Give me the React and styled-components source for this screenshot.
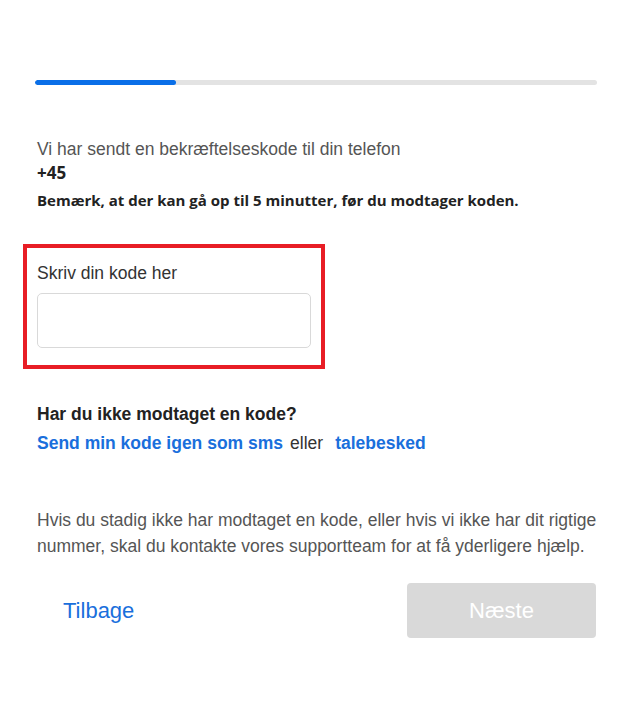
import React from 'react'
import styled, { createGlobalStyle } from 'styled-components'

const GlobalStyle = createGlobalStyle`
  body {
    margin: 0;
    background: #fff;
    font-family: "Liberation Sans", Arial, sans-serif;
  }
`

const Page = styled.div`
  width: 637px;
  height: 726px;
  padding: 80px 40px 0 35px;
  box-sizing: border-box;
`

const Track = styled.div`
  height: 5px;
  border-radius: 3px;
  background: #e3e3e3;
  overflow: hidden;
`

const Fill = styled.div`
  height: 100%;
  border-radius: 3px;
  background: #0a6fe8;
`

const Intro = styled.div`
  margin-top: 54px;
  padding-left: 2px;
`

const Lead = styled.p`
  margin: 0;
  font-size: 17.5px;
  line-height: 20px;
  color: #555;
`

const Strong = styled.p`
  margin: ${p => p.$top || 0}px 0 0;
  font-family: "Open Sans", sans-serif;
  font-weight: 700;
  font-size: ${p => p.$size}px;
  line-height: 22px;
  color: #222;
`

const Highlight = styled.div`
  margin: 33px 0 0 -12px;
  width: 302px;
  border: 4px solid #e81d25;
  padding: 15px 7px 17px 10px;
  box-sizing: border-box;
`

const Label = styled.label`
  display: block;
  font-size: 17.5px;
  line-height: 20px;
  color: #333;
`

const CodeInput = styled.input`
  display: block;
  margin-top: 10px;
  width: 274px;
  height: 55px;
  box-sizing: border-box;
  border: 1px solid #d9d9d9;
  border-radius: 5px;
  outline: none;
`

const Heading = styled.h3`
  margin: 35px 0 0 2px;
  font-size: 17.5px;
  line-height: 20px;
  font-weight: 700;
  color: #222;
`

const LinkRow = styled.div`
  display: flex;
  margin: 9px 0 0 2px;
  font-size: 17.5px;
  line-height: 20px;
  color: #333;
`

const Link = styled.a`
  color: #1a6fdc;
  font-weight: 700;
  text-decoration: none;
  cursor: pointer;
`

const Sep = styled.span`
  margin: 0 12px 0 7px;
`

const Help = styled.p`
  width: 580px;
  margin: 54px 0 0 2px;
  font-size: 17.5px;
  line-height: 26px;
  color: #555;
`

const Footer = styled.div`
  margin-top: 24px;
  display: flex;
  align-items: center;
  justify-content: space-between;
  padding-left: 28px;
  margin-right: 1px;
`

const BackLink = styled.a`
  font-size: 22px;
  color: #1a6fdc;
  text-decoration: none;
  cursor: pointer;
`

const NextButton = styled.button`
  width: 189px;
  height: 55px;
  border: none;
  border-radius: 4px;
  background: #d9d9d9;
  color: #fff;
  font-family: "Liberation Sans", Arial, sans-serif;
  font-size: 22px;
`

export default function App() {
  return (
    <>
      <GlobalStyle />
      <Page>
        <Track>
          <Fill style={{ width: '25%' }} />
        </Track>

        <Intro>
          <Lead>Vi har sendt en bekræftelseskode til din telefon</Lead>
          <Strong $size={17} $top={3}>+45</Strong>
          <Strong $size={15} $top={5}>Bemærk, at der kan gå op til 5 minutter, før du modtager koden.</Strong>
        </Intro>

        <Highlight>
          <Label htmlFor="code">Skriv din kode her</Label>
          <CodeInput id="code" type="text" />
        </Highlight>

        <Heading>Har du ikke modtaget en kode?</Heading>
        <LinkRow>
          <Link>Send min kode igen som sms</Link>
          <Sep>eller</Sep>
          <Link>talebesked</Link>
        </LinkRow>

        <Help>
          Hvis du stadig ikke har modtaget en kode, eller hvis vi ikke har dit rigtige nummer, skal du kontakte vores supportteam for at få yderligere hjælp.
        </Help>

        <Footer>
          <BackLink>Tilbage</BackLink>
          <NextButton disabled>Næste</NextButton>
        </Footer>
      </Page>
    </>
  )
}
